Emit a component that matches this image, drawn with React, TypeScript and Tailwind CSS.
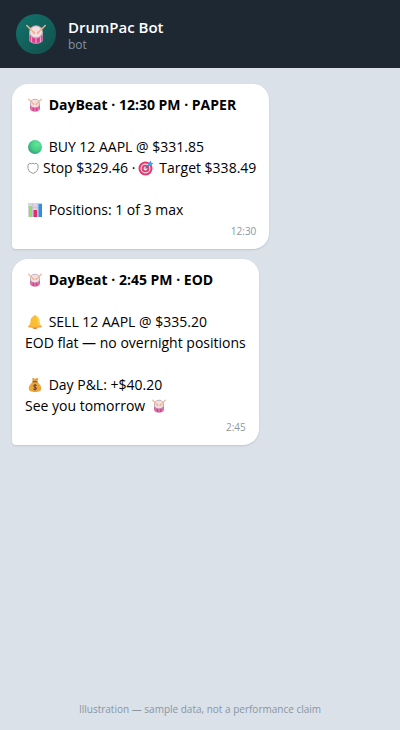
import type { ReactNode } from "react";

function Drum({ className }: { className: string }) {
  return (
    <svg viewBox="0 0 20 20" className={className} aria-hidden="true">
      <path d="M3 8v7.500c0 2.500 3 4.300 7 4.300s7-1.800 7-4.300V8z" fill="#bd9cba" />
      <path d="M3.500 11.500v4c0 2 2.800 3.300 6.500 3.300s6.500-1.300 6.500-3.300v-4z" fill="#e23a8b" />
      <path d="M5.500 12.500v5.500M14.500 12.500v5.500M10 14v5" stroke="#dfabc9" strokeWidth="1.200" />
      <ellipse cx="10" cy="7.800" rx="7" ry="6.600" fill="#b5a6b8" />
      <ellipse cx="10" cy="7.800" rx="6" ry="5.500" fill="#f3dfdf" />
      <path d="M0.800 1.500L8 8.800M19.200 1.500L12 8.800" stroke="#f0b088" strokeWidth="1.500" strokeLinecap="round" />
      <circle cx="8" cy="8.800" r="1.200" fill="#f3ad92" />
      <circle cx="12" cy="8.800" r="1.200" fill="#f3ad92" />
    </svg>
  );
}

const iconClass = "mr-[3px] ml-[3px] inline-block size-[14px] align-[-2px]";

function GreenDot() {
  return (
    <svg viewBox="0 0 14 14" className={iconClass} aria-hidden="true">
      <defs>
        <radialGradient id="green-ball" cx="0.65" cy="0.3" r="0.75">
          <stop offset="0" stopColor="#62e79a" />
          <stop offset="0.6" stopColor="#46ce86" />
          <stop offset="1" stopColor="#399986" />
        </radialGradient>
      </defs>
      <circle cx="7" cy="7" r="7" fill="url(#green-ball)" />
    </svg>
  );
}

function Shield() {
  return (
    <svg viewBox="0 0 12 14" className="mr-1 ml-[2px] inline-block h-[14px] w-3 align-[-2px]" aria-hidden="true">
      <path d="M6 2.200Q4.300 3.500 2.600 2.200Q2 3.500 1 3.700V7.500Q1.300 11 6 12.500Q10.700 11 11 7.500V3.700Q10 3.500 9.400 2.200Q7.700 3.500 6 2.200z" fill="none" stroke="#858585" strokeWidth="0.800" />
    </svg>
  );
}

function Target() {
  return (
    <svg viewBox="0 0 16 16" className="mr-[5px] ml-[3px] inline-block size-4 align-[-3px]" aria-hidden="true">
      <circle cx="7.500" cy="8.500" r="7" fill="#e4386f" />
      <circle cx="7.500" cy="8.500" r="5" fill="#eadce8" />
      <circle cx="7.500" cy="8.500" r="3.800" fill="#df3b70" />
      <circle cx="7.500" cy="8.500" r="1.900" fill="#f1dbe6" />
      <path d="M7.500 8.500L11 5" stroke="#3b75a8" strokeWidth="1.300" />
      <path d="M10 3.500L13 0.500L13.300 2.700L15.500 3L12.500 6L10 6z" fill="#32a9ec" />
    </svg>
  );
}

function Chart() {
  return (
    <svg viewBox="0 0 14 14" className={iconClass} aria-hidden="true">
      <path d="M0 0h14v14H0z" fill="#ddd2e5" />
      <path d="M0 4.500h14M0 9h14M4.500 0v14M9.500 0v14" stroke="#c6b9d0" strokeWidth="0.600" />
      <path d="M1 3h3v11H1z" fill="#8fe35c" />
      <path d="M5.500 7h3.500v7H5.500z" fill="#df2f70" />
      <path d="M10.500 1H14v13h-3.500z" fill="#2c91e5" />
    </svg>
  );
}

function Bell() {
  return (
    <svg viewBox="0 0 14 14" className={iconClass} aria-hidden="true">
      <circle cx="7" cy="1.500" r="1.300" fill="#efa43b" />
      <ellipse cx="7" cy="12.500" rx="2.500" ry="1.500" fill="#de7d35" />
      <path d="M7 1C4 1 2.500 3.500 2.500 6.500C2.500 9 1.500 10 0.300 11Q0 12.500 2 12.500H12Q14 12.500 13.700 11C12.500 10 11.500 9 11.500 6.500C11.500 3.500 10 1 7 1z" fill="#fbbd36" />
      <path d="M8.500 2.500Q10.500 4 10.300 8L11.500 10" stroke="#ffdb65" fill="none" />
      <path d="M0.300 11.500Q7 13.300 13.700 11.500" stroke="#f2a13e" fill="none" />
    </svg>
  );
}

function MoneyBag() {
  return (
    <svg viewBox="0 0 14 14" className={iconClass} aria-hidden="true">
      <path d="M4 0.500L5.500 0L7 1L8.500 0L10.500 0.500L9 4H5z" fill="#dda149" />
      <path d="M5 3.500C3 5 0.700 8 0.700 10.500C0.700 13 3 14 7 14S13.300 13 13.300 10.500C13.300 8 11 5 9 3.500z" fill="#eba638" />
      <path d="M4.500 3.700H9.500" stroke="#8c5740" strokeWidth="1.200" />
      <path d="M8.700 7.500Q7 6.400 5.700 7.500Q5.400 8.700 7 9.200Q9.200 9.800 8.400 11Q7 12 5.300 11M7 6V12.500" stroke="#654339" strokeWidth="1" fill="none" />
    </svg>
  );
}

function DrumMark() {
  return <Drum className={iconClass} />;
}

function Bubble({ title, time, children }: { title: string; time: string; children: ReactNode }) {
  return (
    <article className="w-fit max-w-full rounded-2xl rounded-bl-sm bg-white px-[13px] py-[10px] text-black shadow-[0_1px_2px_rgba(0,0,0,0.12)]">
      <h2 className="mb-[21px] font-bold">
        <DrumMark /> {title}
      </h2>
      {children}
      <time className="mt-1 block text-right text-[10px] leading-[15px] text-[#8b96a3]">{time}</time>
    </article>
  );
}

export default function App() {
  return (
    <div className="flex min-h-screen flex-col bg-[#dae1e9] font-['Open_Sans','Noto_Sans',sans-serif]">
      <header className="flex items-center gap-3 bg-[#1e2833] px-4 py-[14px]">
        <div className="flex size-10 items-center justify-center rounded-full bg-linear-to-br from-[#0f766e] to-[#134e4a]">
          <Drum className="size-5" />
        </div>
        <div className="pt-[2px]">
          <h1 className="text-[15px] leading-5 font-semibold text-white">DrumPac Bot</h1>
          <p className="text-xs leading-4 text-[#8292a2]">bot</p>
        </div>
      </header>
      <main className="flex flex-1 flex-col gap-[10px] px-3 py-4 text-sm leading-[21px]">
        <Bubble title="DayBeat · 12:30 PM · PAPER" time="12:30">
          <p><GreenDot /> BUY 12 AAPL @ $331.85</p>
          <p className="mb-[21px]"><Shield />Stop $329.46 ·<Target />Target $338.49</p>
          <p><Chart /> Positions: 1 of 3 max</p>
        </Bubble>
        <Bubble title="DayBeat · 2:45 PM · EOD" time="2:45">
          <p><Bell /> SELL 12 AAPL @ $335.20</p>
          <p className="mb-[21px]">EOD flat — no overnight positions</p>
          <p><MoneyBag /> Day P&amp;L: +$40.20</p>
          <p>See you tomorrow <DrumMark /></p>
        </Bubble>
      </main>
      <footer className="px-3 pb-[13px] text-center text-[10px] leading-4 text-[#8996a4]">
        Illustration — sample data, not a performance claim
      </footer>
    </div>
  );
}
